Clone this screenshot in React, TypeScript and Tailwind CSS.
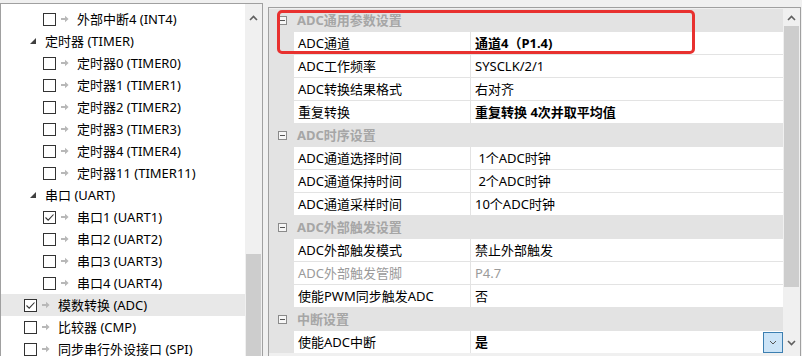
import React from "react";

type TreeItem = { d: 1 | 2; t: string; exp?: boolean; cb?: boolean; sel?: boolean };

const tree: TreeItem[] = [
  { d: 2, t: "外部中断4 (INT4)" },
  { d: 1, exp: true, t: "定时器 (TIMER)" },
  { d: 2, t: "定时器0 (TIMER0)" },
  { d: 2, t: "定时器1 (TIMER1)" },
  { d: 2, t: "定时器2 (TIMER2)" },
  { d: 2, t: "定时器3 (TIMER3)" },
  { d: 2, t: "定时器4 (TIMER4)" },
  { d: 2, t: "定时器11 (TIMER11)" },
  { d: 1, exp: true, t: "串口 (UART)" },
  { d: 2, cb: true, t: "串口1 (UART1)" },
  { d: 2, t: "串口2 (UART2)" },
  { d: 2, t: "串口3 (UART3)" },
  { d: 2, t: "串口4 (UART4)" },
  { d: 1, cb: true, sel: true, t: "模数转换 (ADC)" },
  { d: 1, t: "比较器 (CMP)" },
  { d: 1, t: "同步串行外设接口 (SPI)" },
];

type GridRow = { h?: string; n?: string; v?: string; bold?: boolean; dis?: boolean; dd?: boolean };

const rows: GridRow[] = [
  { h: "ADC通用参数设置" },
  { n: "ADC通道", v: "通道4（P1.4)", bold: true },
  { n: "ADC工作频率", v: "SYSCLK/2/1" },
  { n: "ADC转换结果格式", v: "右对齐" },
  { n: "重复转换", v: "重复转换 4次并取平均值", bold: true },
  { h: "ADC时序设置" },
  { n: "ADC通道选择时间", v: " 1个ADC时钟" },
  { n: "ADC通道保持时间", v: " 2个ADC时钟" },
  { n: "ADC通道采样时间", v: "10个ADC时钟" },
  { h: "ADC外部触发设置" },
  { n: "ADC外部触发模式", v: "禁止外部触发" },
  { n: "ADC外部触发管脚", v: "P4.7", dis: true },
  { n: "使能PWM同步触发ADC", v: "否" },
  { h: "中断设置" },
  { n: "使能ADC中断", v: "是", bold: true, dd: true },
];

function Check({ on }: { on?: boolean }) {
  return (
    <div className="w-[13px] h-[13px] border border-[#333333] bg-white shrink-0 flex items-center justify-center">
      {on && (
        <svg width="11" height="11" viewBox="0 0 11 11">
          <path d="M1.5 5.5 L4.2 8.2 L9.5 2.5" fill="none" stroke="#333333" strokeWidth="1.1" />
        </svg>
      )}
    </div>
  );
}

function Arrow() {
  return (
    <svg width="8" height="8" viewBox="0 0 8 8" className="shrink-0">
      <path d="M0 3 H4 V0.8 L7.6 4 L4 7.2 V5 H0 Z" fill="#b8b8b8" />
    </svg>
  );
}

function Tri() {
  return (
    <svg width="6" height="6" viewBox="0 0 6 6" className="shrink-0">
      <polygon points="6,0 6,6 0,6" fill="#404040" />
    </svg>
  );
}

function ScrollArrow({ up }: { up?: boolean }) {
  return (
    <svg width="9" height="6" viewBox="0 0 9 6">
      <path d={up ? "M1 5 L4.5 1.5 L8 5" : "M1 1 L4.5 4.5 L8 1"} fill="none" stroke="#606060" strokeWidth="1.6" />
    </svg>
  );
}

function Minus() {
  return (
    <div className="w-[9px] h-[9px] border border-[#8a8a8a] bg-[#f6f6f6] flex items-center justify-center">
      <div className="w-[5px] h-px bg-[#555555]" />
    </div>
  );
}

export default function App() {
  return (
    <div className="w-[802px] h-[356px] bg-[#f0f0f0] flex items-start overflow-hidden relative font-['Noto_Sans','Noto_Sans_CJK_SC',sans-serif] text-[13px] text-black">
      {/* Left tree panel */}
      <div className="w-[263px] h-[360px] mt-[3px] border-l border-t border-r border-[#a0a0a0] bg-white flex shrink-0">
        <div className="w-[244px] pt-[4px] flex flex-col">
          {tree.map((it, i) => (
            <div
              key={i}
              className={`h-[22px] flex items-center leading-[22px] whitespace-nowrap ${it.sel ? "bg-[#e8e8e8]" : ""} ${
                it.exp ? "pl-[29px]" : it.d === 2 ? "pl-[42px]" : "pl-[23px]"
              }`}
            >
              {it.exp ? (
                <>
                  <Tri />
                  <span className="ml-[9px]">{it.t}</span>
                </>
              ) : (
                <>
                  <Check on={it.cb} />
                  <span className="ml-[5px]">
                    <Arrow />
                  </span>
                  <span className="ml-[8px]">{it.t}</span>
                </>
              )}
            </div>
          ))}
        </div>
        <div className="w-[17px] bg-[#f0f0f0] flex flex-col">
          <div className="h-[26px] flex items-center justify-center pt-[2px]">
            <ScrollArrow up />
          </div>
          <div className="h-[224px]" />
          <div className="flex-1 mx-px bg-[#cdcdcd]" />
        </div>
      </div>

      {/* Right property grid panel */}
      <div className="w-[533px] h-[360px] ml-[5px] mt-[7px] border-l border-t border-r border-[#a0a0a0] bg-[#f0f0f0] flex shrink-0">
        <div className="w-[514px] pt-px">
          <div className="flex flex-col gap-px bg-[#e3e3e3]">
            {rows.map((r, i) =>
              r.h ? (
                <div key={i} className="h-[22px] flex items-center">
                  <div className="w-[24px] flex items-center pl-[9px]">
                    <Minus />
                  </div>
                  <span className="pl-[4px] font-bold text-[#a6a6a6] leading-[22px]">{r.h}</span>
                </div>
              ) : (
                <div key={i} className="h-[22px] flex gap-px">
                  <div className="w-[24px]" />
                  <div className={`w-[176px] bg-white pl-[4px] leading-[22px] whitespace-nowrap ${r.dis ? "text-[#9a9a9a]" : ""}`}>
                    {r.n}
                  </div>
                  <div
                    className={`flex-1 bg-white pl-[4px] leading-[22px] whitespace-pre flex items-center justify-between ${
                      r.bold ? "font-bold" : ""
                    } ${r.dis ? "text-[#9a9a9a]" : ""}`}
                  >
                    <span>{r.v}</span>
                    {r.dd && (
                      <div className="w-[20px] h-[21px] border border-[#3c7fb1] bg-[#cce4f7] flex items-center justify-center">
                        <svg width="8" height="5" viewBox="0 0 8 5">
                          <path d="M1 1 L4 4 L7 1" fill="none" stroke="#555555" strokeWidth="1" />
                        </svg>
                      </div>
                    )}
                  </div>
                </div>
              )
            )}
          </div>
        </div>
        <div className="w-[17px] flex flex-col pt-px">
          <div className="h-[17px] flex items-center justify-center">
            <ScrollArrow up />
          </div>
          <div className="h-[261px] mx-px bg-[#cdcdcd]" />
          <div className="h-[47px]" />
          <div className="h-[17px] flex items-center justify-center">
            <ScrollArrow />
          </div>
        </div>
      </div>

      {/* Red highlight box */}
      <div className="absolute left-[277px] top-[10px] w-[418px] h-[44px] border-[3px] border-[#e8312f] rounded-[5px]" />
    </div>
  );
}
